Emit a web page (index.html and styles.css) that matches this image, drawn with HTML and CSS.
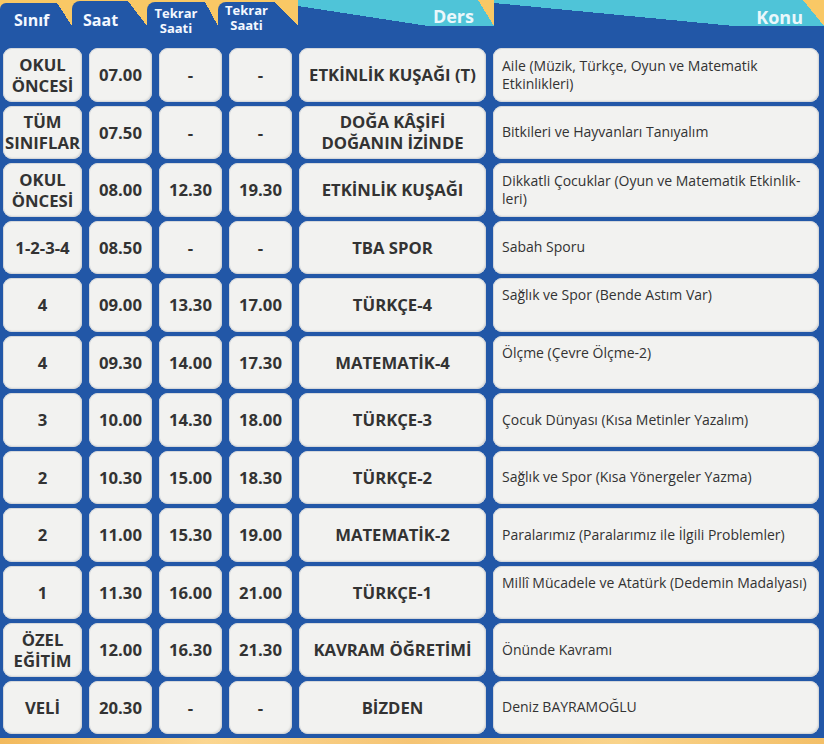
FILE: index.html
```html
<!DOCTYPE html>
<html lang="tr">
<head>
<meta charset="utf-8">
<title>Yayın Akışı</title>
<link rel="stylesheet" href="styles.css">
</head>
<body>
<div class="page">
  <div class="header">
    <div class="tabs">
      <div class="tab t-sinif">Sınıf</div>
      <div class="tab t-saat">Saat</div>
      <div class="tab t-tek1"><span class="ln">Tekrar</span><span class="ln">Saati</span></div>
      <div class="tab t-tek2"><span class="ln">Tekrar</span><span class="ln">Saati</span></div>
      <div class="tab t-ders">Ders</div>
      <div class="tab t-konu">Konu</div>
    </div>
  </div>
  <div class="grid">
    <div class="c">OKUL<br>ÖNCESİ</div><div class="c">07.00</div><div class="c">-</div><div class="c">-</div><div class="c">ETKİNLİK KUŞAĞI (T)</div><div class="c k">Aile (Müzik, Türkçe, Oyun ve Matematik<br>Etkinlikleri)</div>
    <div class="c">TÜM<br>SINIFLAR</div><div class="c">07.50</div><div class="c">-</div><div class="c">-</div><div class="c">DOĞA KÂŞİFİ<br>DOĞANIN İZİNDE</div><div class="c k">Bitkileri ve Hayvanları Tanıyalım</div>
    <div class="c">OKUL<br>ÖNCESİ</div><div class="c">08.00</div><div class="c">12.30</div><div class="c">19.30</div><div class="c">ETKİNLİK KUŞAĞI</div><div class="c k">Dikkatli Çocuklar (Oyun ve Matematik Etkinlik-<br>leri)</div>
    <div class="c">1-2-3-4</div><div class="c">08.50</div><div class="c">-</div><div class="c">-</div><div class="c">TBA SPOR</div><div class="c k">Sabah Sporu</div>
    <div class="c">4</div><div class="c">09.00</div><div class="c">13.30</div><div class="c">17.00</div><div class="c">TÜRKÇE-4</div><div class="c k top">Sağlık ve Spor (Bende Astım Var)</div>
    <div class="c">4</div><div class="c">09.30</div><div class="c">14.00</div><div class="c">17.30</div><div class="c">MATEMATİK-4</div><div class="c k top">Ölçme (Çevre Ölçme-2)</div>
    <div class="c">3</div><div class="c">10.00</div><div class="c">14.30</div><div class="c">18.00</div><div class="c">TÜRKÇE-3</div><div class="c k">Çocuk Dünyası (Kısa Metinler Yazalım)</div>
    <div class="c">2</div><div class="c">10.30</div><div class="c">15.00</div><div class="c">18.30</div><div class="c">TÜRKÇE-2</div><div class="c k">Sağlık ve Spor (Kısa Yönergeler Yazma)</div>
    <div class="c">2</div><div class="c">11.00</div><div class="c">15.30</div><div class="c">19.00</div><div class="c">MATEMATİK-2</div><div class="c k">Paralarımız (Paralarımız ile İlgili Problemler)</div>
    <div class="c">1</div><div class="c">11.30</div><div class="c">16.00</div><div class="c">21.00</div><div class="c">TÜRKÇE-1</div><div class="c k top">Millî Mücadele ve Atatürk (Dedemin Madalyası)</div>
    <div class="c">ÖZEL<br>EĞİTİM</div><div class="c">12.00</div><div class="c">16.30</div><div class="c">21.30</div><div class="c">KAVRAM ÖĞRETİMİ</div><div class="c k">Önünde Kavramı</div>
    <div class="c">VELİ</div><div class="c">20.30</div><div class="c">-</div><div class="c">-</div><div class="c">BİZDEN</div><div class="c k">Deniz BAYRAMOĞLU</div>
  </div>
  <div class="band"></div>
</div>
</body>
</html>
```

FILE: styles.css
```css
:root {
  --blue: #2257a7;
  --yellow: #f9c865;
  --teal: #4fc4d8;
  --cell: #f2f2f0;
  --ink: #333333;
}

* { box-sizing: border-box; }

html, body {
  margin: 0;
  padding: 0;
  background: var(--blue);
}

body {
  font-family: "Open Sans", "DejaVu Sans", sans-serif;
  width: 824px;
  height: 744px;
  overflow: hidden;
}

.page {
  width: 824px;
  background: var(--blue);
}

.header {
  height: 48px;
  background: linear-gradient(to bottom, var(--yellow) 0, var(--yellow) 26px, var(--blue) 26px);
}

.tabs {
  display: flex;
  align-items: flex-end;
  height: 26px;
}

.tab {
  color: #f4f8ff;
  font-weight: 700;
  background-color: var(--blue);
  background-repeat: no-repeat;
  flex: none;
}

.t-sinif {
  width: 72px;
  height: 23px;
  font-size: 16px;
  line-height: 20px;
  padding: 7px 0 0 14px;
  border-top-left-radius: 6px;
  background-image: linear-gradient(to bottom left, var(--yellow) 50%, transparent 50%);
  background-size: 15px 100%;
  background-position: right top;
}

.t-saat {
  width: 75px;
  height: 25px;
  font-size: 16px;
  line-height: 20px;
  padding: 9px 0 0 11px;
  border-top-left-radius: 8px;
  background-image: linear-gradient(to bottom left, var(--yellow) 50%, transparent 50%);
  background-size: 19px 100%;
  background-position: right top;
}

.t-tek1, .t-tek2 {
  height: 24px;
  font-size: 13px;
  line-height: 15px;
  text-align: center;
  border-top-left-radius: 8px;
  background-image: linear-gradient(to bottom left, var(--yellow) 50%, transparent 50%);
  background-position: right top;
  display: flex;
  flex-direction: column;
  align-items: center;
}

.ln {
  display: block;
  height: 15px;
}

.t-tek1 {
  width: 71px;
  padding: 4px 13px 0 0;
  background-size: 13px 100%;
}

.t-tek2 {
  width: 80px;
  padding: 1px 23px 0 0;
  background-size: 23px 100%;
}

.t-ders, .t-konu {
  height: 26px;
  font-size: 18px;
  line-height: 22px;
  text-align: right;
  color: #eaf7fb;
  background-color: var(--teal);
}

.t-ders {
  width: 196px;
  padding: 5px 20px 0 0;
  background-image:
    linear-gradient(to bottom left, var(--yellow) 50%, transparent 50%),
    linear-gradient(to top right, var(--blue) 50%, transparent 50%);
  background-size: 16px 100%, 130px 20px;
  background-position: right top, left bottom;
}

.t-konu {
  width: 330px;
  padding: 6px 21px 0 0;
  background-image:
    linear-gradient(to bottom left, var(--yellow) 50%, transparent 50%),
    linear-gradient(to top right, var(--blue) 50%, transparent 50%);
  background-size: 21px 100%, 240px 23px;
  background-position: right top, left bottom;
}

.grid {
  display: grid;
  grid-template-columns: 79px 63px 63px 63px 187px 326px;
  grid-auto-rows: 53.5px;
  column-gap: 7px;
  row-gap: 4px;
  padding: 0 0 0 3px;
}

.c {
  display: flex;
  align-items: center;
  justify-content: center;
  text-align: center;
  background: var(--cell);
  border-radius: 9px;
  box-shadow: inset 0 0 0 1px #d4d7db, inset -1px -1px 2px rgba(0, 0, 0, 0.12);
  color: var(--ink);
  font-weight: 700;
  font-size: 16.7px;
  line-height: 21px;
}

.k {
  justify-content: flex-start;
  text-align: left;
  font-weight: 400;
  font-size: 14px;
  line-height: 18px;
  padding: 0 3px 0 9px;
  white-space: nowrap;
}

.k.top {
  align-items: flex-start;
  padding-top: 8px;
}

.band {
  height: 6px;
  margin-top: 4px;
  background: linear-gradient(to right, #f2b95c 0%, #fbd690 25%, #f5c474 50%, #f9d38a 75%, #f3bf68 100%);
}
```
